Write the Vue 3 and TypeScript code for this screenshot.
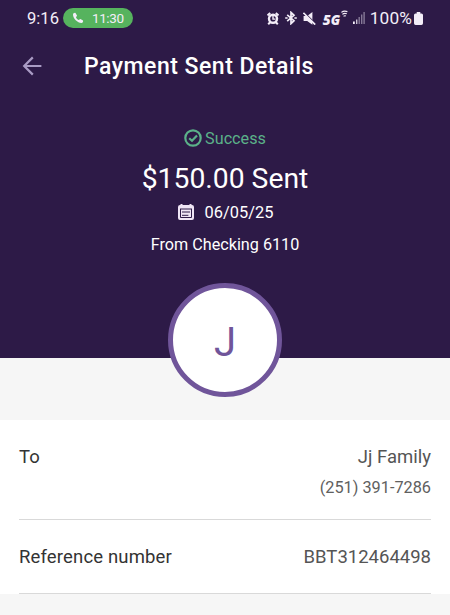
<template>
  <div class="screen">
    <header class="hero">
      <div class="status-bar">
        <span class="clock">9:16</span>
        <div class="call-pill">
          <svg class="phone-icon" viewBox="0 0 24 24">
            <path
              d="M2 5c0-2 3-4 5-3l3 5c0 2-2 2-2 4 1 2 3 4 5 5 2 0 2-2 4-2l5 3c1 2-1 5-3 5C11 22 2 13 2 5z"
            />
          </svg>
          <span>11:30</span>
        </div>
        <div class="status-icons">
          <svg class="alarm-icon" viewBox="0 0 12 13">
            <circle cx="6" cy="6.8" r="5.2" />
            <path
              d="M.5 3.4 3.2 1M11.5 3.4 8.8 1M1.2 12.2l2-2M10.8 12.2l-2-2"
              stroke="currentColor"
              stroke-width="2"
            />
            <circle cx="6" cy="6.8" r="2.8" fill="#2d1a47" />
            <path d="M6 4v3.1h2.4" fill="none" stroke="currentColor" stroke-width="1.4" />
          </svg>
          <svg class="bluetooth-icon" viewBox="0 0 12 14">
            <path
              d="M2.2 3.8 9 9.7 6 12.6V1.4l3 2.9L2.2 10.2M.2 7h2.4M9.4 7h2.4"
              fill="none"
              stroke="currentColor"
              stroke-width="1.7"
            />
          </svg>
          <svg class="mute-icon" viewBox="0 0 13 13">
            <path d="M.6 3.9h3.6L9.4 0v12.8L4.2 9H.6z" />
            <path d="M1 .2 12.8 12" stroke="#2d1a47" stroke-width="1.2" />
            <path d="M.4.8 12.2 12.6" stroke="currentColor" stroke-width="1.7" />
          </svg>
          <span class="network">5G</span>
          <svg class="wave-icon" viewBox="0 0 7 8">
            <path
              d="M.4 2.4Q3 .2 6.4 1.6M1.4 4.4q1.8-1.6 4.4-.6M2.6 6.3q.9-.9 2.3-.3"
              fill="none"
              stroke="currentColor"
              stroke-width="1.2"
            />
          </svg>
          <svg class="signal-icon" viewBox="0 0 12 12">
            <rect x="0" y="9.5" width="1.8" height="2.5" />
            <rect x="3" y="7.5" width="1.4" height="4.5" opacity="0.8" />
            <rect x="5.5" y="5" width="1.4" height="7" opacity="0.45" />
            <rect x="8" y="2.5" width="1.4" height="9.5" opacity="0.45" />
            <rect x="10.4" y="0" width="1.4" height="12" opacity="0.45" />
          </svg>
          <span class="battery-level">100%</span>
          <svg class="battery-icon" viewBox="0 0 9 13">
            <path d="M2.7 0h3.6v1.5h1.2Q9 1.5 9 3v8.2Q9 13 7.4 13H1.6Q0 13 0 11.2V3q0-1.5 1.5-1.5h1.2z" />
          </svg>
        </div>
      </div>

      <nav class="title-bar">
        <button class="back-button" type="button" aria-label="Back">
          <svg viewBox="0 0 20 20">
            <path d="M19.4 10H2M10.8 1.4 2.2 10l8.6 8.6" />
          </svg>
        </button>
        <h1>Payment Sent Details</h1>
      </nav>

      <div class="status">
        <svg class="check-icon" viewBox="0 0 18 18">
          <circle cx="9" cy="9" r="7.7" />
          <path d="M5.2 9.2 8 11.8l5-5.3" />
        </svg>
        <span>{{ payment.status }}</span>
      </div>
      <div class="amount">{{ payment.amount }} Sent</div>
      <div class="date">
        <svg class="calendar-icon" viewBox="0 0 16 16">
          <path d="M2.5 0h2v1h7V0h2v1h.5q2 0 2 2v11q0 2-2 2H2q-2 0-2-2V3q0-2 2-2h.5z" />
          <path
            d="M2 5h12M4 8h8M4 11.3h6.4M2.5 5v8.5h11V5"
            fill="none"
            stroke="#2d1a47"
            stroke-width="1"
          />
        </svg>
        <span>{{ payment.date }}</span>
      </div>
      <div class="source">From {{ payment.account }}</div>
      <div class="avatar">{{ payment.initial }}</div>
    </header>

    <main class="details">
      <div v-for="row in rows" :key="row.label" class="row">
        <span class="label">{{ row.label }}</span>
        <div class="value">
          <span>{{ row.value }}</span>
          <span v-if="row.note" class="note">{{ row.note }}</span>
        </div>
      </div>
    </main>
  </div>
</template>

<script setup lang="ts">
interface DetailRow {
  label: string;
  value: string;
  note?: string;
}

const payment = {
  status: 'Success',
  amount: '$150.00',
  date: '06/05/25',
  account: 'Checking 6110',
  initial: 'J',
};

const rows: DetailRow[] = [
  { label: 'To', value: 'Jj Family', note: '(251) 391-7286' },
  { label: 'Reference number', value: 'BBT312464498' },
];
</script>

<style>
body {
  background: #f6f6f6;
}
</style>

<style scoped>
.screen {
  height: 615px;
  overflow: hidden;
  background: #f6f6f6;
  font-family: Roboto, 'Liberation Sans', sans-serif;
}

svg {
  display: block;
  flex: none;
  fill: currentColor;
}

.hero {
  display: flex;
  flex-direction: column;
  align-items: center;
  box-sizing: border-box;
  height: 358px;
  background: #2d1a47;
  color: #fff;
}

.hero > * {
  flex: none;
}

.status-bar {
  display: flex;
  align-items: center;
  align-self: stretch;
  height: 36px;
  padding: 0 27px;
  color: #f3edf8;
}

.clock {
  width: 36px;
  font-size: 16.6px;
}

.call-pill {
  display: flex;
  align-items: center;
  gap: 8px;
  box-sizing: border-box;
  width: 70px;
  height: 20px;
  padding-left: 9px;
  border-radius: 10px;
  background: #56b35e;
  font-size: 13.5px;
  letter-spacing: -0.4px;
}

.phone-icon {
  width: 12px;
  height: 12px;
}

.status-icons {
  display: flex;
  align-items: center;
  margin-left: auto;
}

.alarm-icon {
  width: 12px;
  height: 13px;
}

.bluetooth-icon {
  width: 12px;
  height: 14px;
  margin-left: 6px;
}

.mute-icon {
  width: 13px;
  height: 13px;
  margin-left: 6px;
}

.network {
  width: 18px;
  margin-left: 7px;
  padding-top: 4px;
  font-family: 'Open Sans', Roboto, sans-serif;
  font-size: 13.5px;
  font-style: italic;
  font-weight: 800;
  line-height: 14px;
}

.wave-icon {
  width: 7px;
  height: 8px;
  margin: 0 5px 8px 0;
}

.signal-icon {
  width: 12px;
  height: 12px;
}

.battery-level {
  margin: 0 2px 0 5px;
  font-size: 17.3px;
  letter-spacing: 0.1px;
}

.battery-icon {
  width: 9px;
  height: 13px;
}

.title-bar {
  display: flex;
  align-items: center;
  align-self: stretch;
  height: 60px;
  padding-left: 22px;
}

.back-button {
  width: 20px;
  height: 20px;
  padding: 0;
  border: none;
  background: none;
  color: #a99bc4;
  cursor: pointer;
}

.back-button path {
  fill: none;
  stroke: currentColor;
  stroke-width: 2.2;
}

h1 {
  margin: 0 0 0 42px;
  font-size: 23px;
  font-weight: 500;
  letter-spacing: 0.5px;
}

.status {
  display: flex;
  align-items: center;
  gap: 3px;
  height: 20px;
  margin-top: 32px;
  color: #5bb189;
  font-size: 16.2px;
}

.check-icon {
  width: 18px;
  height: 18px;
  fill: none;
  stroke: currentColor;
  stroke-width: 2.2;
}

.amount {
  margin-top: 14px;
  font-size: 28.3px;
  line-height: 34px;
}

.date {
  display: flex;
  align-items: center;
  gap: 11px;
  height: 20px;
  margin-top: 6px;
  padding-left: 1px;
  font-size: 16.4px;
}

.calendar-icon {
  width: 16px;
  height: 16px;
  color: #efe5f5;
}

.source {
  margin-top: 13px;
  font-size: 16.2px;
  line-height: 20px;
}

.avatar {
  display: flex;
  align-items: center;
  justify-content: center;
  box-sizing: border-box;
  width: 114px;
  height: 114px;
  margin-top: 28px;
  padding-top: 4px;
  border: 5px solid #70559a;
  border-radius: 50%;
  background: #fff;
  color: #70559a;
  font-size: 40px;
}

.details {
  margin-top: 62px;
  padding: 0 19px;
  background: #fff;
}

.row {
  display: flex;
  justify-content: space-between;
  box-sizing: border-box;
  height: 74px;
  padding-top: 25px;
  border-bottom: 1px solid #d9d9d9;
  color: #333;
  font-size: 18.5px;
  line-height: 24px;
}

.row:first-child {
  height: 100px;
}

.label {
  letter-spacing: 0.15px;
}

.value {
  display: flex;
  flex-direction: column;
  align-items: flex-end;
  color: #555;
}

.note {
  margin-top: 7px;
  color: #606060;
  font-size: 16.3px;
}
</style>
